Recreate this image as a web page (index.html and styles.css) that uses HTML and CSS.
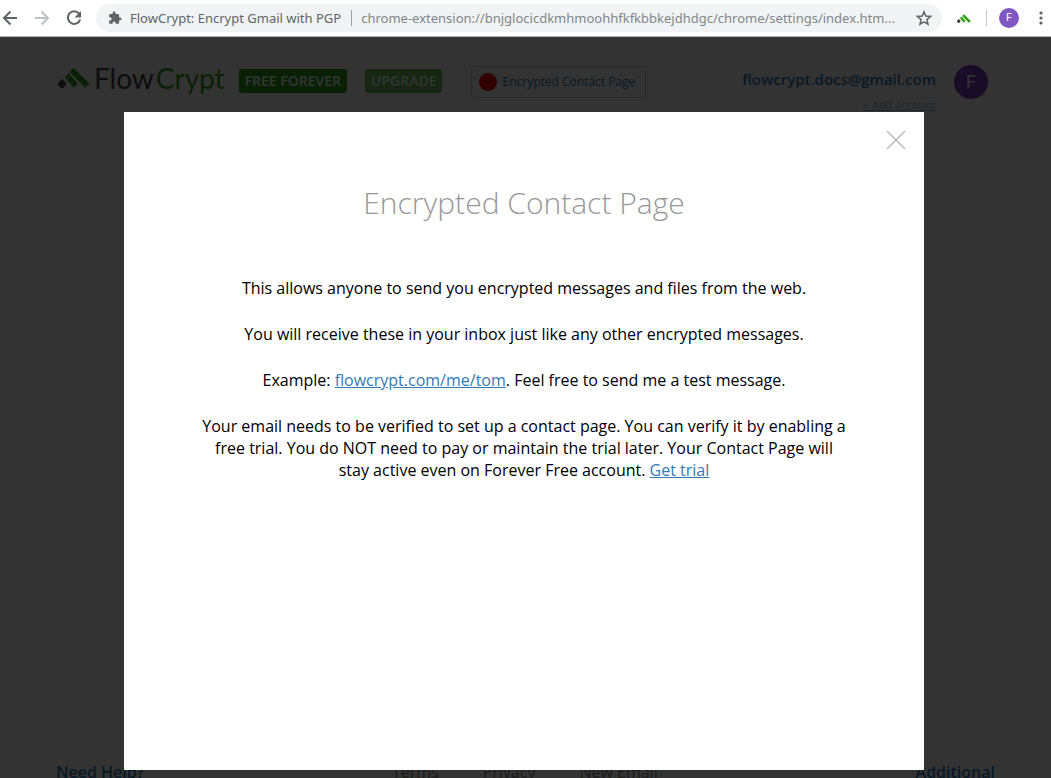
FILE: index.html
```
<!DOCTYPE html>
<html lang="en">
<head>
<meta charset="utf-8">
<meta name="viewport" content="width=device-width, initial-scale=1">
<title>FlowCrypt: Encrypt Gmail with PGP</title>
<link rel="stylesheet" href="styles.css">
</head>
<body>
<div class="toolbar">
  <button class="nav back" aria-label="Back"><svg width="20" height="20" viewBox="0 0 20 20"><path d="M17 10H4M10.500 3.500L4 10l6.500 6.500"/></svg></button>
  <button class="nav forward" aria-label="Forward"><svg width="20" height="20" viewBox="0 0 20 20"><path d="M3 10h13M9.500 3.500L16 10l-6.500 6.500"/></svg></button>
  <button class="nav reload" aria-label="Reload"><svg width="20" height="20" viewBox="0 0 20 20"><path d="M15 5.500A6.300 6.300 0 1 0 16.200 11.500"/><path class="solid" d="M17 3v6.500h-6.500z"/></svg></button>
  <div class="address">
    <svg class="puzzle" width="14" height="14" viewBox="0 0 24 24"><path d="M20.500 11H19V7a2 2 0 0 0-2-2h-4V3.500a2.500 2.500 0 0 0-5 0V5H4a2 2 0 0 0-2 2v3.800h1.500a2.700 2.700 0 0 1 0 5.400H2V20a2 2 0 0 0 2 2h3.800v-1.500a2.700 2.700 0 0 1 5.400 0V22H17a2 2 0 0 0 2-2v-4h1.500a2.500 2.500 0 0 0 0-5z"/></svg>
    <span class="site">FlowCrypt: Encrypt Gmail with PGP</span>
    <span class="url">chrome-extension://bnjglocicdkmhmoohhfkfkbbkejdhdgc/chrome/settings/index.htm...</span>
    <button class="star" aria-label="Bookmark"><svg width="16" height="16" viewBox="0 0 16 16"><path d="M8 1.800l1.800 4.300 4.700.4-3.600 3.100 1.100 4.600L8 11.800l-4 2.400 1.100-4.600L1.500 6.500l4.700-.4z"/></svg></button>
  </div>
  <button class="extension" aria-label="FlowCrypt"><svg width="14" height="9" viewBox="0 0 32 20"><path fill="#444" d="M4.200 11l4.200 4.300-2.800 4.700H2.600L0 17v-1.800z"/><path fill="#31a217" d="M6.700 9.300l4-4 9 10.400-4 4zM11.700 4l4-4 16 15.700-4.400 4z"/></svg></button>
  <span class="divider"></span>
  <button class="profile" aria-label="Profile">F</button>
  <button class="more" aria-label="Menu"><svg width="4" height="14" viewBox="0 0 4 14"><circle cx="2" cy="2" r="1.600"/><circle cx="2" cy="7" r="1.600"/><circle cx="2" cy="12" r="1.600"/></svg></button>
</div>

<div class="viewport">
  <div class="settings">
    <header class="header">
      <div class="logo">
        <svg width="32" height="20" viewBox="0 0 32 20"><path fill="#444" d="M4.200 11l4.200 4.300-2.800 4.700H2.600L0 17v-1.800z"/><path fill="#31a217" d="M6.700 9.300l4-4 9 10.400-4 4zM11.700 4l4-4 16 15.700-4.400 4z"/></svg>
        <span class="wordmark">Flow<span class="crypt">Crypt</span></span>
      </div>
      <span class="badge">FREE FOREVER</span>
      <button class="badge upgrade">UPGRADE</button>
      <button class="contact"><span class="dot"></span>Encrypted Contact Page</button>
      <div class="account">
        <span class="email">flowcrypt.docs@gmail.com</span>
        <a class="add" href="#">+ Add account</a>
      </div>
      <span class="avatar">F</span>
    </header>
    <footer class="footer">
      <a class="help" href="#">Need Help?</a>
      <nav class="links"><a href="#">Terms</a><a href="#">Privacy</a><a href="#">New Email</a></nav>
      <a class="help" href="#">Additional</a>
    </footer>
  </div>

  <div class="overlay">
    <section class="modal" role="dialog" aria-labelledby="title">
      <button class="close" aria-label="Close"><svg width="20" height="20" viewBox="0 0 20 20"><path d="M1 1l18 18M19 1L1 19"/></svg></button>
      <h1 class="title" id="title">Encrypted Contact Page</h1>
      <div class="copy">
        <p>This allows anyone to send you encrypted messages and files from the web.</p>
        <p>You will receive these in your inbox just like any other encrypted messages.</p>
        <p>Example: <a href="#">flowcrypt.com/me/tom</a>. Feel free to send me a test message.</p>
        <p>Your email needs to be verified to set up a contact page. You can verify it by enabling a free trial. You do NOT need to pay or maintain the trial later. Your Contact Page will stay active even on Forever Free account. <a href="#">Get trial</a></p>
      </div>
    </section>
  </div>
</div>
</body>
</html>
```
FILE: styles.css
```
* { box-sizing: border-box; }
body {
  margin: 0;
  height: 100vh;
  display: flex;
  flex-direction: column;
  overflow: hidden;
  font-family: "Open Sans", "Noto Sans", sans-serif;
  font-size: 16px;
  line-height: 22px;
  color: #000;
}
button {
  border: 0;
  padding: 0;
  background: none;
  font: inherit;
  color: inherit;
  flex: none;
}
svg { display: block; flex: none; }

.toolbar {
  display: flex;
  align-items: center;
  height: 37px;
  flex: none;
  background: #fff;
  border-bottom: 1px solid #b5b5b5;
}
.nav { width: 20px; margin-right: 12px; }
.nav svg { fill: none; stroke: #5f6368; stroke-width: 2; }
.forward svg { stroke: #bdc1c6; }
.nav .solid { fill: #5f6368; stroke: none; }
.address {
  flex: 1;
  min-width: 0;
  height: 28px;
  display: flex;
  align-items: center;
  padding: 0 10px 0 12px;
  border-radius: 14px;
  background: #f1f3f4;
  font-family: "Noto Sans", "Open Sans", sans-serif;
  font-size: 13px;
  line-height: 16px;
  white-space: nowrap;
}
.puzzle { fill: #5f6368; margin-right: 8px; }
.site {
  color: #5f6368;
  padding-right: 10px;
  margin-right: 9px;
  border-right: 1px solid #9aa0a6;
}
.url { flex: 1; min-width: 0; overflow: hidden; color: #80868b; }
.star { margin-left: 8px; }
.star svg { fill: none; stroke: #5f6368; stroke-width: 1.5; }
.extension { margin-left: 15px; }
.divider { width: 1px; height: 16px; margin: 0 12px 0 15px; background: #c8cacd; }
.profile {
  width: 20px;
  height: 20px;
  border-radius: 50%;
  background: #7e57c2;
  color: #fff;
  font-family: Roboto, sans-serif;
  font-size: 11px;
  line-height: 20px;
}
.more { margin: 0 8px 0 20px; }
.more svg { fill: #5f6368; }

.viewport { flex: 1; min-height: 0; display: grid; }
.settings, .overlay { grid-area: 1 / 1; min-height: 0; }
.settings {
  display: flex;
  flex-direction: column;
  justify-content: space-between;
  overflow: hidden;
  background: #fff;
}
.header {
  display: flex;
  align-items: flex-start;
  padding: 27px 63px 0 58px;
}
.logo { display: flex; align-items: center; height: 28px; margin-right: 14px; }
.wordmark {
  margin-left: 4px;
  font-family: Lato, sans-serif;
  font-size: 28px;
  line-height: 28px;
  color: #444;
}
.crypt { color: #31a217; margin-left: 2px; }
.badge {
  height: 24px;
  margin: 5px 18px 0 0;
  padding: 0 6px;
  border-radius: 3px;
  background: #31a217;
  color: #fff;
  font-size: 14px;
  font-weight: 600;
  line-height: 24px;
  white-space: nowrap;
}
.upgrade { opacity: .7; margin-right: 29px; }
.contact {
  display: flex;
  align-items: center;
  height: 32px;
  margin-top: 2px;
  padding: 0 10px 0 7px;
  border: 1px solid #ccc;
  border-radius: 3px;
  color: #337ab7;
  font-size: 12px;
}
.dot { width: 18px; height: 18px; margin-right: 5px; border-radius: 50%; background: #f00; }
.account {
  display: flex;
  flex-direction: column;
  align-items: flex-end;
  margin-left: auto;
  padding-top: 5px;
}
.email { color: #337ab7; font-size: 15px; font-weight: 600; line-height: 20px; }
.add { margin-top: 8px; color: #337ab7; opacity: .6; font-size: 11px; line-height: 16px; }
.avatar {
  width: 34px;
  height: 34px;
  margin: 1px 0 0 18px;
  border-radius: 50%;
  background: #7e3fc2;
  color: #fff;
  font-family: Roboto, sans-serif;
  font-size: 18px;
  line-height: 34px;
  text-align: center;
}
.footer {
  display: flex;
  justify-content: space-between;
  height: 18px;
  padding: 0 56px;
  line-height: 24px;
}
.footer a { text-decoration: none; }
.help { color: #337ab7; font-weight: 600; }
.links { display: flex; gap: 44px; margin-right: 10px; }
.links a { color: #888; }

.overlay {
  z-index: 1;
  padding: 75px 3px 8px 0;
  background: rgba(0, 0, 0, .8);
}
.modal {
  display: flex;
  flex-direction: column;
  width: 100%;
  max-width: 800px;
  height: 100%;
  margin: 0 auto;
  padding: 18px;
  background: #fff;
  text-align: center;
}
.close { align-self: flex-end; }
.close svg { fill: none; stroke: #bbb; stroke-width: 1.5; }
.title {
  margin: 32px 0 0;
  color: #989898;
  font-size: 30px;
  font-weight: 300;
  line-height: 42px;
}
.copy { max-width: 650px; margin: 53px auto 0; }
.copy p { margin: 0 0 24px; }
.copy a { color: #337ab7; }
```
